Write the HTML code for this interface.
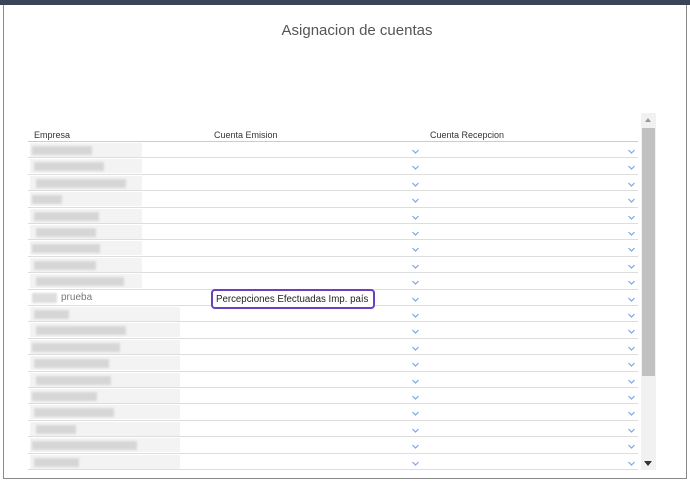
<!DOCTYPE html>
<html><head><meta charset="utf-8"><style>
*{margin:0;padding:0;box-sizing:border-box}
body{width:690px;height:482px;background:#fff;position:relative;overflow:hidden;font-family:"Liberation Sans",sans-serif}
.top{position:absolute;left:0;top:0;width:690px;height:5px;background:#3b4557}
.frame{position:absolute;left:3px;top:5px;width:684px;height:474px;border:1px solid #8a8a8a;border-top:none}
.title{position:absolute;left:0;width:714px;top:22px;text-align:center;font-size:15px;color:#555;}
.h{position:absolute;top:130px;font-size:9px;color:#333}
.row{position:absolute;left:28px;width:610px;height:16.4px;border-bottom:1px solid #ddd}
.chev{position:absolute;top:7px;width:7px;height:5px}
.blk{position:absolute;background:#d0d0d0;filter:blur(1px)}
.bg{position:absolute;background:#f3f3f3}
.sb{position:absolute;left:641px;top:113px;width:15px;height:357px;background:#f1f1f1}
.th{position:absolute;left:642px;top:128px;width:13px;height:248px;background:#c1c1c1}
</style></head><body>
<div class="top"></div><div class="frame"></div>
<div class="title">Asignacion de cuentas</div>
<div class="h" style="left:34px">Empresa</div>
<div class="h" style="left:214px">Cuenta Emision</div>
<div class="h" style="left:430px">Cuenta Recepcion</div>
<div style="position:absolute;left:28px;top:141px;width:610px;border-top:1px solid #ccc"></div>
<div id="rows"></div>
<div class="sb"></div><div class="th"></div>
<div style="position:absolute;left:645px;top:118px;border:3.5px solid transparent;border-bottom:4px solid #999;border-top:none"></div>
<div style="position:absolute;left:644px;top:461px;border:4px solid transparent;border-top:5px solid #333;border-bottom:none"></div>
<script>
var w=[60,70,90,30,65,60,68,62,88,50,35,90,88,75,75,65,80,40,105,45];
var h='';
for(var i=0;i<20;i++){
 var t=142+i*16.4;
 h+='<div class="row" style="top:'+t+'px">';
 if(i!=9){h+='<div class="bg" style="left:2px;top:1px;width:'+(i>9?150:112)+'px;height:14px"></div><div class="blk" style="left:'+(4+(i%3)*2)+'px;top:4px;width:'+w[i]+'px;height:9px;opacity:.8"></div>';}
 else{h+='<div class="blk" style="left:4px;top:3px;width:25px;height:10px;background:#ddd"></div><div style="position:absolute;left:33px;top:2px;font-size:10px;color:#777">prueba</div>';}
 h+='<svg class="chev" style="left:384px" viewBox="0 0 7 5"><path d="M0.5 1L3.5 4L6.5 1" fill="none" stroke="#7aa8e0" stroke-width="1.2"/></svg>';
 h+='<svg class="chev" style="left:600px" viewBox="0 0 7 5"><path d="M0.5 1L3.5 4L6.5 1" fill="none" stroke="#7aa8e0" stroke-width="1.2"/></svg>';
 h+='</div>';
}
h+='<div style="position:absolute;left:211px;top:289px;width:164px;height:20px;border:2px solid #6a3fc0;border-radius:4px;font-size:9.7px;color:#222;padding:3px 0 0 3px;white-space:nowrap;background:#fff">Percepciones Efectuadas Imp. país</div>';
document.getElementById('rows').innerHTML=h;
</script>
</body></html>
